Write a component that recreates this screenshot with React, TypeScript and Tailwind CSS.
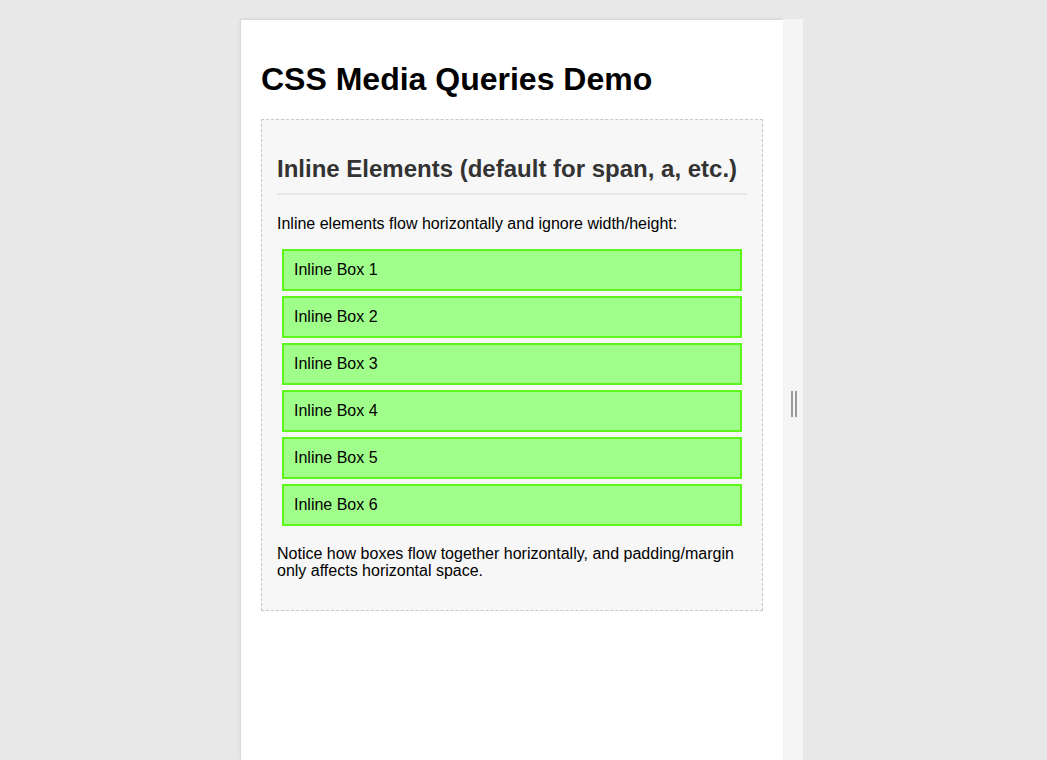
const boxes = ["Inline Box 1", "Inline Box 2", "Inline Box 3", "Inline Box 4", "Inline Box 5", "Inline Box 6"];

export default function App() {
  return (
    <div className="h-[760px] overflow-hidden bg-[#e8e8e8] font-['Liberation_Sans',Arial,sans-serif] text-black">
      <div className="ml-[240px] mt-[19px] flex h-[741px] w-[563px]">
        {/* preview frame */}
        <div className="w-[543px] border-l border-t border-[#d9d9d9] bg-white p-5 shadow-[0_0_3px_rgba(0,0,0,0.08)]">
          <h1 className="my-[21px] text-[32px] font-bold leading-[37px]">CSS Media Queries Demo</h1>
          <div className="border border-dashed border-[#c8c8c8] bg-[#f7f7f7] px-[15px] pt-[15px] pb-[15px]">
            <h2 className="mt-[20px] mb-[20px] border-b-2 border-[#e6e6e6] pb-[10px] text-[24px] font-bold leading-[28px] text-[#333]">
              Inline Elements (default for span, a, etc.)
            </h2>
            <p className="my-4 text-[16px] leading-[18px]">Inline elements flow horizontally and ignore width/height:</p>
            <div>
              {boxes.map((b) => (
                <div
                  key={b}
                  className="m-[5px] border-2 border-[#5df51c] bg-[#a0ff8a] px-[10px] py-[10px] text-[16px] leading-[18px]"
                >
                  {b}
                </div>
              ))}
            </div>
            <p className="mt-[19px] mb-4 text-[16px] leading-[17px]">
              Notice how boxes flow together horizontally, and padding/margin only affects horizontal space.
            </p>
          </div>
        </div>
        {/* resize handle */}
        <div className="flex w-5 items-start justify-center gap-[2px] bg-[#f5f5f5] pt-[372px] pl-[2px]">
          <div className="h-[26px] w-[2px] bg-[#9a9a9a]" />
          <div className="h-[26px] w-[2px] bg-[#9a9a9a]" />
        </div>
      </div>
    </div>
  );
}
